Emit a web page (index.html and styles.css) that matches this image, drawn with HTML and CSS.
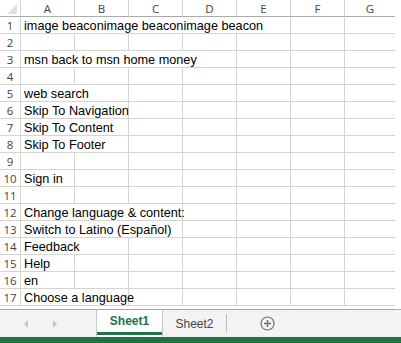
FILE: index.html
```html
<!DOCTYPE html>
<html>
<head>
<meta charset="utf-8">
<link rel="stylesheet" href="styles.css">
</head>
<body>
<div class="sheet">
  <div class="grid">
    <div class="corner"><span class="tri"></span></div>
    <div class="colh">A</div><div class="colh">B</div><div class="colh">C</div><div class="colh">D</div><div class="colh">E</div><div class="colh">F</div><div class="colh last">G</div>

    <div class="rowh">1</div><div class="cell s5">image beaconimage beaconimage beacon</div><div class="cell"></div><div class="cell last"></div>
    <div class="rowh">2</div><div class="cell"></div><div class="cell"></div><div class="cell"></div><div class="cell"></div><div class="cell"></div><div class="cell"></div><div class="cell last"></div>
    <div class="rowh">3</div><div class="cell s4">msn back to msn home money</div><div class="cell"></div><div class="cell"></div><div class="cell last"></div>
    <div class="rowh">4</div><div class="cell"></div><div class="cell"></div><div class="cell"></div><div class="cell"></div><div class="cell"></div><div class="cell"></div><div class="cell last"></div>
    <div class="rowh">5</div><div class="cell s2">web search</div><div class="cell"></div><div class="cell"></div><div class="cell"></div><div class="cell"></div><div class="cell last"></div>
    <div class="rowh">6</div><div class="cell s2">Skip To Navigation</div><div class="cell"></div><div class="cell"></div><div class="cell"></div><div class="cell"></div><div class="cell last"></div>
    <div class="rowh">7</div><div class="cell s2">Skip To Content</div><div class="cell"></div><div class="cell"></div><div class="cell"></div><div class="cell"></div><div class="cell last"></div>
    <div class="rowh">8</div><div class="cell s2">Skip To Footer</div><div class="cell"></div><div class="cell"></div><div class="cell"></div><div class="cell"></div><div class="cell last"></div>
    <div class="rowh">9</div><div class="cell"></div><div class="cell"></div><div class="cell"></div><div class="cell"></div><div class="cell"></div><div class="cell"></div><div class="cell last"></div>
    <div class="rowh">10</div><div class="cell">Sign in</div><div class="cell"></div><div class="cell"></div><div class="cell"></div><div class="cell"></div><div class="cell"></div><div class="cell last"></div>
    <div class="rowh">11</div><div class="cell"></div><div class="cell"></div><div class="cell"></div><div class="cell"></div><div class="cell"></div><div class="cell"></div><div class="cell last"></div>
    <div class="rowh">12</div><div class="cell s3">Change language &amp; content:</div><div class="cell"></div><div class="cell"></div><div class="cell"></div><div class="cell last"></div>
    <div class="rowh">13</div><div class="cell s3">Switch to Latino (Español)</div><div class="cell"></div><div class="cell"></div><div class="cell"></div><div class="cell last"></div>
    <div class="rowh">14</div><div class="cell s2">Feedback</div><div class="cell"></div><div class="cell"></div><div class="cell"></div><div class="cell"></div><div class="cell last"></div>
    <div class="rowh">15</div><div class="cell">Help</div><div class="cell"></div><div class="cell"></div><div class="cell"></div><div class="cell"></div><div class="cell"></div><div class="cell last"></div>
    <div class="rowh">16</div><div class="cell">en</div><div class="cell"></div><div class="cell"></div><div class="cell"></div><div class="cell"></div><div class="cell"></div><div class="cell last"></div>
    <div class="rowh">17</div><div class="cell s2">Choose a language</div><div class="cell"></div><div class="cell"></div><div class="cell"></div><div class="cell"></div><div class="cell last"></div>
  </div>
  <div class="gap"></div>
  <div class="tabbar">
    <div class="nav">
      <span class="arrow left"></span>
      <span class="arrow right"></span>
    </div>
    <div class="tab active">
      <div class="tab-label">Sheet1</div>
      <div class="tab-line"></div>
    </div>
    <div class="tab">
      <div class="tab-label">Sheet2</div>
    </div>
    <div class="sep"></div>
    <div class="add">
      <svg width="15" height="15" viewBox="0 0 15 15"><circle cx="7.5" cy="7.5" r="6.5" fill="none" stroke="#6f6f6f" stroke-width="1.2"/><path d="M7.5 4v7M4 7.5h7" stroke="#6f6f6f" stroke-width="1.4"/></svg>
    </div>
  </div>
  <div class="greenbar"></div>
</div>
</body>
</html>
```
FILE: styles.css
```css
html, body {
  margin: 0;
  padding: 0;
  background: #ffffff;
}
.sheet {
  width: 401px;
  height: 343px;
  overflow: hidden;
  display: flex;
  flex-direction: column;
}
.grid {
  display: grid;
  grid-template-columns: 21px repeat(6, 54px) 50px;
  grid-auto-rows: 17px;
  font-family: "Liberation Sans", Arial, sans-serif;
  font-size: 12.7px;
}
.grid > div {
  box-sizing: border-box;
}
.corner {
  border-right: 1px solid #d4d4d4;
  border-bottom: 1px solid #ababab;
  display: flex;
  align-items: flex-end;
  justify-content: flex-end;
  padding: 0 3px 2px 0;
}
.tri {
  width: 0;
  height: 0;
  border-left: 10px solid transparent;
  border-bottom: 10px solid #dfdfdf;
}
.colh {
  border-right: 1px solid #d4d4d4;
  border-bottom: 1px solid #ababab;
  color: #444444;
  text-align: center;
  padding-top: 1px;
  line-height: 16px;
  font-family: "Open Sans", sans-serif;
  font-size: 11.5px;
}
.colh.last {
  border-right: none;
}
.rowh {
  border-right: 1px solid #d4d4d4;
  border-bottom: 1px solid #d4d4d4;
  color: #444444;
  text-align: center;
  line-height: 17px;
  font-family: "Open Sans", sans-serif;
  font-size: 11.5px;
}
.cell {
  border-right: 1px solid #d4d4d4;
  border-bottom: 1px solid #d4d4d4;
  padding-left: 3px;
  padding-top: 2px;
  line-height: 15px;
  white-space: nowrap;
  color: #000000;
}
.cell.last {
  border-right: none;
}
.s2 { grid-column: span 2; }
.s3 { grid-column: span 3; }
.s4 { grid-column: span 4; }
.s5 { grid-column: span 5; }
.gap {
  height: 3px;
}
.tabbar {
  height: 27px;
  border-top: 1px solid #a6a6a6;
  background: #f3f3f3;
  display: flex;
  font-family: "Liberation Sans", Arial, sans-serif;
  font-size: 12px;
}
.nav {
  width: 96px;
  display: flex;
  align-items: center;
  gap: 25px;
  padding-left: 24px;
  box-sizing: border-box;
}
.arrow {
  width: 0;
  height: 0;
  border-top: 4px solid transparent;
  border-bottom: 4px solid transparent;
}
.arrow.left {
  border-right: 4px solid #c6c6c6;
}
.arrow.right {
  border-left: 4px solid #c6c6c6;
}
.tab {
  display: flex;
  flex-direction: column;
  width: 63px;
  color: #444444;
}
.tab.active {
  width: 67px;
  box-sizing: border-box;
  background: #ffffff;
  border-left: 1px solid #c8c8c8;
  border-right: 1px solid #c8c8c8;
  color: #217346;
  font-weight: bold;
}
.tab-label {
  flex: 1;
  display: flex;
  align-items: center;
  justify-content: center;
}
.tab-line {
  height: 3px;
  background: #217346;
  margin-bottom: 2px;
}
.sep {
  width: 1px;
  background: #bdbdbd;
  margin: 4px 0 5px;
}
.add {
  display: flex;
  align-items: center;
  padding-left: 33px;
}
.add svg {
  display: block;
}
.greenbar {
  height: 6px;
  background: #217346;
}
```
